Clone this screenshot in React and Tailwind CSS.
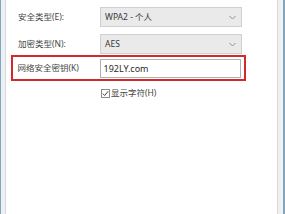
const font = {
  fontFamily: '"Noto Sans", "Noto Sans CJK SC", sans-serif',
};

const Chevron = () => (
  <svg width="7" height="5" viewBox="0 0 7 5" className="mr-[5px]">
    <path d="M0.5 1 L3.5 4 L6.5 1" fill="none" stroke="#8f8f8f" strokeWidth="1" />
  </svg>
);

const SelectRow = ({ label, value, className }) => (
  <div className={"flex items-center h-[20px] " + className}>
    <div className="w-[82px] text-[8.5px] text-[#454545] leading-none">{label}</div>
    <div className="w-[142px] h-[20px] flex items-center justify-between bg-[#eaeaea] border border-[#d0d0d0]">
      <span className="pl-[4px] text-[8.5px] text-[#383838] leading-none">{value}</span>
      <Chevron />
    </div>
  </div>
);

export default function App() {
  return (
    <div className="w-[285px] h-[214px] flex bg-white" style={font}>
      <div className="w-[1px] bg-[#7fa5bf]" />
      <div className="w-[4px] bg-[#eef1f3]" />
      <div className="flex-1 bg-white border-l border-r border-[#d9d9d9] pt-[7px] pl-[12px]">
        <SelectRow label="安全类型(E):" value="WPA2 - 个人" />
        <SelectRow label="加密类型(N):" value="AES" className="mt-[7px]" />
        <div className="-ml-[7px] mt-[1px] w-[235px] h-[26px] border-[2.5px] border-[#d3282c] flex items-center pl-[4.5px]">
          <div className="w-[82px] text-[8.5px] text-[#454545] leading-none">网络安全密钥(K)</div>
          <div className="w-[141px] h-[19px] flex items-center bg-white border border-[#b0b0b0]">
            <span className="pl-[3px] text-[9px] text-[#2a2a2a] leading-none">192LY.com</span>
          </div>
        </div>
        <div className="flex items-center mt-[8px] ml-[83px]">
          <div className="w-[9px] h-[9px] border border-[#8c8c8c] bg-white flex items-center justify-center">
            <svg width="7" height="7" viewBox="0 0 7 7">
              <path d="M0.8 3.6 L2.7 5.5 L6.2 1.2" fill="none" stroke="#444" strokeWidth="1" />
            </svg>
          </div>
          <span className="ml-[1px] text-[8.5px] text-[#454545] leading-none">显示字符(H)</span>
        </div>
      </div>
      <div className="w-[5px] bg-[#f0f0f0]" />
      <div className="w-[2px] bg-[#7fa5bf]" />
    </div>
  );
}
